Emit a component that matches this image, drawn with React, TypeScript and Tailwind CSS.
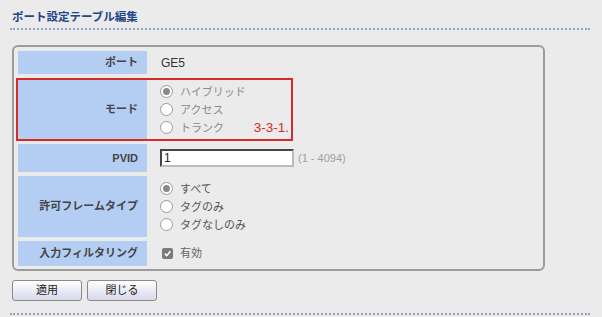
import React from "react";

const font = { fontFamily: '"Liberation Sans", "Noto Sans CJK JP", sans-serif' };

function Radio({ checked, label, dim }: { checked?: boolean; label: string; dim?: boolean }) {
  return (
    <div className="flex items-center h-[18px]">
      <span className="w-[13px] h-[13px] rounded-full border border-[#9a9a9a] bg-white flex items-center justify-center">
        {checked && <span className="w-[7px] h-[7px] rounded-full bg-[#8a8a8a]" />}
      </span>
      <span className={"ml-[7px] text-[11px] leading-[18px] " + (dim ? "text-[#8a8a8a]" : "text-[#555]")}>{label}</span>
    </div>
  );
}

function Label({ children }: { children: React.ReactNode }) {
  return (
    <div className="w-[129px] shrink-0 bg-[#b4cdf2] flex items-center justify-end pr-[9px] text-[11px] font-bold text-[#444]">
      {children}
    </div>
  );
}

export default function App() {
  return (
    <div style={font} className="w-[602px] h-[317px] bg-[#ebebeb] overflow-hidden pt-[9px] px-[10px]">
      <div className="pl-[2px] text-[11.5px] font-bold text-[#23458a] leading-[16px] pb-[3px] border-b-2 border-dotted border-[#8ea3c4] w-[580px]">
        ポート設定テーブル編集
      </div>

      <div className="mt-[15px] ml-[2px] w-[533px] border-2 border-[#9c9c9c] rounded-[6px] p-[4px] pb-[3px] flex flex-col gap-[4px]">
        <div className="flex h-[23px]">
          <Label>ポート</Label>
          <div className="pl-[14px] flex items-center text-[12px] text-[#333]">GE5</div>
        </div>

        <div className="flex h-[61px] mt-[1px] relative">
          <Label>モード</Label>
          <div className="pl-[13px] flex flex-col justify-center">
            <Radio checked dim label="ハイブリッド" />
            <Radio dim label="アクセス" />
            <Radio dim label="トランク" />
          </div>
          <div className="absolute left-[-2px] top-[-1px] w-[277px] h-[63px] border-2 border-[#d42a2a]">
            <span className="absolute right-[2px] bottom-[3px] text-[13.5px] leading-[16px] text-[#d42a2a]">3-3-1.</span>
          </div>
        </div>

        <div className="flex h-[28px]">
          <Label>PVID</Label>
          <div className="pl-[13px] flex items-center">
            <div className="w-[134px] h-[18px] bg-white border-2 border-[#444] border-r-[#bbb] border-b-[#bbb] flex items-center pl-[2px] text-[12px] text-[#222]">
              1
            </div>
            <span className="ml-[4px] text-[11px] text-[#a0a0a0]">(1 - 4094)</span>
          </div>
        </div>

        <div className="flex h-[61px]">
          <Label>許可フレームタイプ</Label>
          <div className="pl-[13px] flex flex-col justify-center">
            <Radio checked label="すべて" />
            <Radio label="タグのみ" />
            <Radio label="タグなしのみ" />
          </div>
        </div>

        <div className="flex h-[25px]">
          <Label>入力フィルタリング</Label>
          <div className="pl-[15px] flex items-center">
            <span className="w-[11px] h-[11px] rounded-[2px] bg-[#7a7a7a] flex items-center justify-center">
              <svg width="9" height="9" viewBox="0 0 10 10">
                <path d="M2 5.2 L4.2 7.4 L8.2 2.6" fill="none" stroke="#fff" strokeWidth="1.8" />
              </svg>
            </span>
            <span className="ml-[7px] text-[11px] text-[#666]">有効</span>
          </div>
        </div>
      </div>

      <div className="flex gap-[5px] mt-[9px] ml-[2px]">
        <button className="w-[70px] h-[21px] border border-[#8a8a8a] rounded-[3px] bg-gradient-to-b from-white to-[#d8d8ec] text-[11px] text-[#222] leading-none">
          適用
        </button>
        <button className="w-[70px] h-[21px] border border-[#8a8a8a] rounded-[3px] bg-gradient-to-b from-white to-[#d8d8ec] text-[11px] text-[#222] leading-none">
          閉じる
        </button>
      </div>

      <div className="mt-[12px] w-[580px] border-b-2 border-dotted border-[#8ea3c4]" />
    </div>
  );
}
